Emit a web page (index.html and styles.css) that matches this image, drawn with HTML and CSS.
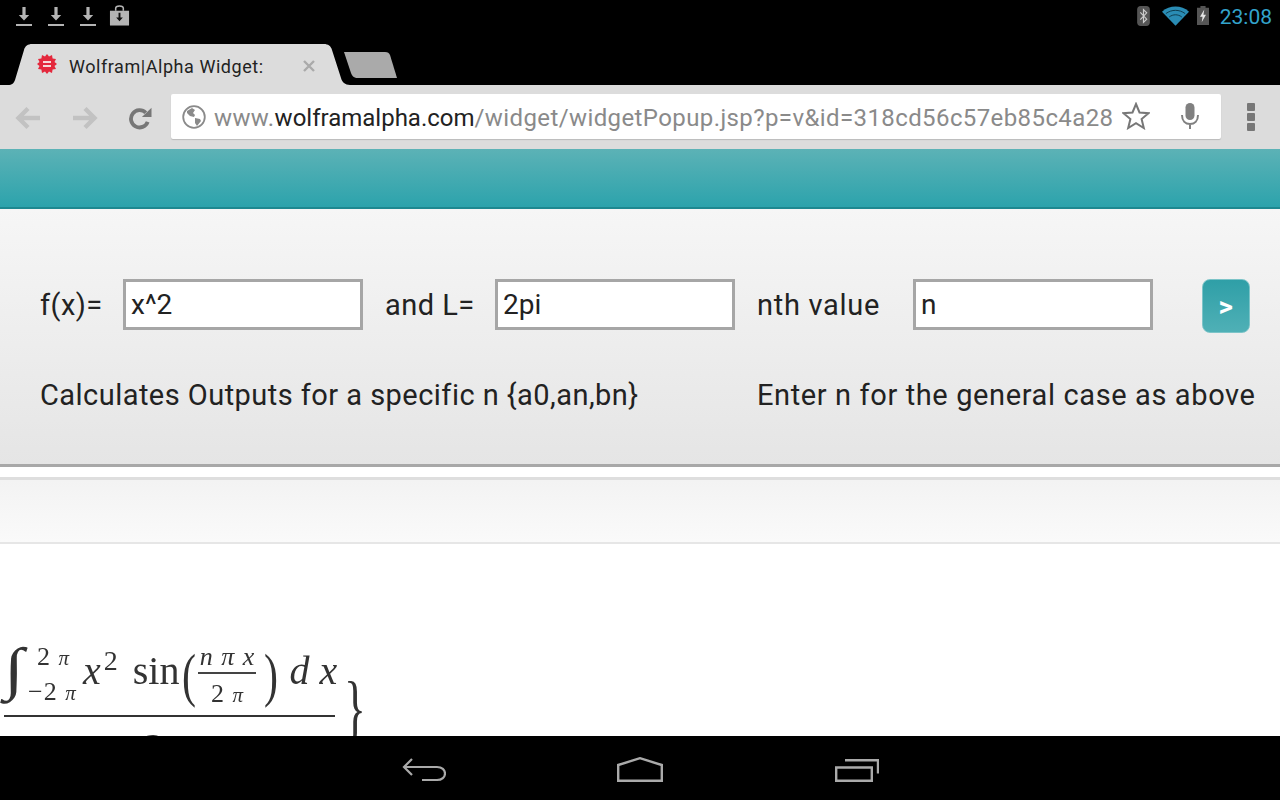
FILE: index.html
```html
<!DOCTYPE html>
<html lang="en">
<head>
    <meta charset="UTF-8">
    <title>Wolfram|Alpha Widget:</title>
    <link rel="stylesheet" href="styles.css">
</head>
<body>
    <div class="chrome-top">
        <div class="status-bar">
            <div class="status-left">
                <svg class="icon-dl" viewBox="0 0 16 20"><path d="M6.400 1h3.200v8h3.600L8 14.500 2.800 9h3.600z" fill="#b4b4b4"/><rect y="18" width="16" height="2" fill="#b4b4b4"/></svg>
                <svg class="icon-dl" viewBox="0 0 16 20"><path d="M6.400 1h3.200v8h3.600L8 14.500 2.800 9h3.600z" fill="#b4b4b4"/><rect y="18" width="16" height="2" fill="#b4b4b4"/></svg>
                <svg class="icon-dl" viewBox="0 0 16 20"><path d="M6.400 1h3.200v8h3.600L8 14.500 2.800 9h3.600z" fill="#b4b4b4"/><rect y="18" width="16" height="2" fill="#b4b4b4"/></svg>
                <svg class="icon-bag" viewBox="0 0 22 22"><path d="M1 6h20v15.500H1z" fill="#b4b4b4"/><path d="M7 6V3.500C7 2 8.500 1 11 1s4 1 4 2.500V6" fill="none" stroke="#b4b4b4" stroke-width="1.600"/><path d="M10 8h2v5h2.500L11 17l-3.500-4H10z" fill="#111"/></svg>
            </div>
            <div class="status-right">
                <svg class="icon-bt" viewBox="0 0 14 22"><rect width="14" height="22" rx="4" fill="#555"/><path d="M3.500 7l7 7.500L7 18V4l3.500 3.500L3.500 15" fill="none" stroke="#ccc" stroke-width="1.300"/></svg>
                <svg class="icon-wifi" viewBox="0 0 28 20"><path d="M0 5.500C8-1.500 20-1.500 28 5.500L14 20z" fill="#2a8cb4"/><path d="M4 7.500C10 3 18 3 24 7.500M7.500 11c4-3 9-3 13 0" fill="none" stroke="#0c3a4c" stroke-width="1"/></svg>
                <svg class="icon-batt" viewBox="0 0 14 22"><path d="M4 0h6v2h4v20H0V2h4z" fill="#555"/><path d="M8.500 4L3.500 12.500h3L5.500 19l5-9h-3z" fill="#e6e6e6"/></svg>
                <span class="clock">23:08</span>
            </div>
        </div>
        <div class="tab-strip">
            <div class="tab">
                <svg class="favicon" viewBox="0 0 20 20"><path d="M10 0l2 2.500L15 1l.6 3.400L19 5l-1.500 3L20 10l-2.500 2 1.500 3-3.400.6L15 19l-3-1.500L10 20l-2-2.500L5 19l-.6-3.400L1 15l1.500-3L0 10l2.500-2L1 5l3.400-.6L5 1l3 1.500z" fill="#e4283c"/><path d="M6 7h8v2H6zM6 11h8v2H6z" fill="#f6d8d8"/></svg>
                <span class="tab-title">Wolfram|Alpha Widget:</span>
                <svg class="tab-close" viewBox="0 0 12 12"><path d="M1 1l10 10M11 1L1 11" stroke="#aaa" stroke-width="2.400"/></svg>
            </div>
            <div class="new-tab"></div>
        </div>
    </div>

    <div class="toolbar">
        <svg class="nav-arrow" viewBox="0 0 26 24"><path d="M25 12H4M13 2.500L3.500 12l9.500 9.500" fill="none" stroke="#c2c2c2" stroke-width="4.400"/></svg>
        <svg class="nav-arrow nav-forward" viewBox="0 0 26 24"><path d="M1 12h21M13 2.500l9.500 9.500-9.500 9.500" fill="none" stroke="#c2c2c2" stroke-width="4.400"/></svg>
        <svg class="nav-reload" viewBox="0 0 24 24"><path d="M19.500 15.500A9 9 0 1 1 17.500 6" fill="none" stroke="#777" stroke-width="4"/><path d="M13.500 10.500H23.500V.8z" fill="#777"/></svg>
        <div class="omnibox">
            <svg class="globe" viewBox="0 0 24 24"><circle cx="12" cy="12" r="10.800" fill="#fff" stroke="#8a8a8a" stroke-width="1.800"/><path d="M5 6l5-3 3 2-2 3 2 2-1 2-4-1-3-3zM13 13l5 1 1 2-4 5-2-3z" fill="#8a8a8a"/></svg>
            <div class="url"><span class="url-dim">www.</span><span class="url-host">wolframalpha.com</span><span class="url-dim">/widget/widgetPopup.jsp?p=v&amp;id=318cd56c57eb85c4a28f</span></div>
            <svg class="star" viewBox="0 0 28 28"><path d="M14 2l3.500 8.500 9 .7-6.900 5.900 2.200 8.900L14 21.200 6.200 26l2.200-8.900-6.900-5.900 9-.7z" fill="none" stroke="#777" stroke-width="2"/></svg>
            <svg class="mic" viewBox="0 0 20 28"><rect x="5.500" y="1" width="9" height="17" rx="4.500" fill="#808080"/><path d="M2 13c0 6 3.500 9 8 9s8-3 8-9M10 22v5" fill="none" stroke="#808080" stroke-width="2"/></svg>
        </div>
        <div class="menu-dots"><i></i><i></i><i></i></div>
    </div>

    <div class="page">
        <div class="widget-head"></div>
        <div class="widget-form">
            <div class="form-row">
                <span class="lbl">f(x)=</span>
                <div class="field">x^2</div>
                <span class="lbl">and L=</span>
                <div class="field">2pi</div>
                <span class="lbl lbl-wide">nth value</span>
                <div class="field">n</div>
                <div class="go-btn">&gt;</div>
            </div>
            <div class="hint-row">
                <span class="hint-a">Calculates Outputs for a specific n {a0,an,bn}</span>
                <span class="hint-b">Enter n for the general case as above</span>
            </div>
        </div>
        <div class="pod-strip"></div>
        <div class="result">
            <div class="math">
                <div class="math-top">
                    <span class="integral">∫</span>
                    <span class="limits"><span class="lim-up">2 <i>π</i></span><span>−2 <i>π</i></span></span>
                    <span class="mvar">x<sup>2</sup></span>
                    <span class="fn">sin</span>
                    <span class="paren">(</span>
                    <span class="frac"><span class="frac-num">n π x</span><span>2 <i>π</i></span></span>
                    <span class="paren paren-r">)</span>
                    <span class="mvar dx">d x</span>
                </div>
                <div class="math-rule"></div>
                <div class="math-bottom">2 <i>π</i></div>
            </div>
            <span class="brace">}</span>
        </div>
    </div>

    <div class="nav-bar">
        <svg class="nav-back" viewBox="0 0 44 24"><path d="M10 1L2 9l8 8M2.500 9H35c5 0 8 3 8 6.500S40 22 35 22H20" fill="none" stroke="#aaa" stroke-width="2.200"/></svg>
        <svg class="nav-home" viewBox="0 0 46 25"><path d="M1.200 23.800V8L23 1.200 44.800 8v15.800z" fill="none" stroke="#aaa" stroke-width="2.400"/></svg>
        <svg class="nav-recent" viewBox="0 0 44 23"><path d="M1.200 8.500h35.600v13.300H1.200zM10 1.200h33v13.300" fill="none" stroke="#aaa" stroke-width="2.400"/></svg>
    </div>
</body>
</html>
```

FILE: styles.css
```css
* {
    box-sizing: border-box;
    margin: 0;
    padding: 0;
}

html,
body {
    height: 100%;
    overflow: hidden;
}

body {
    width: 1280px;
    height: 800px;
    display: flex;
    flex-direction: column;
    font-family: Roboto, "Liberation Sans", sans-serif;
    background: #000;
}

svg {
    display: block;
    flex: none;
}

/* status bar + tabs */
.chrome-top {
    height: 85px;
    background: #000;
}

.status-bar {
    height: 44px;
    display: flex;
    justify-content: space-between;
    align-items: flex-start;
    padding: 6px 8px 0 16px;
}

.status-left {
    display: flex;
    gap: 16px;
}

.icon-dl {
    width: 16px;
    height: 20px;
}

.icon-bag {
    width: 21px;
    height: 21px;
    margin: -1px 0 0 -3px;
}

.status-right {
    display: flex;
    align-items: flex-start;
    color: #33a4cc;
}

.icon-bt {
    width: 13px;
    height: 20px;
}

.icon-wifi {
    width: 27px;
    height: 20px;
    margin-left: 12px;
}

.icon-batt {
    width: 12px;
    height: 21px;
    margin: -1px 0 0 8px;
}

.clock {
    margin-left: 11px;
    font-size: 21px;
    line-height: 23px;
}

.tab-strip {
    height: 41px;
    display: flex;
    align-items: flex-end;
    padding-left: 8px;
}

.tab {
    width: 342px;
    height: 41px;
    display: flex;
    align-items: center;
    padding: 4px 0 0 29px;
    background: #dcdcdc;
    clip-path: path("M0 41 C4 41 6 39 7 36 L16 6 C17 2 20 0 24 0 L316 0 C320 0 323 2 324 6 L333 34 C334 38 337 41 342 41 Z");
}

.favicon {
    width: 20px;
    height: 20px;
    margin-top: -5px;
}

.tab-title {
    margin-left: 12px;
    font-size: 18px;
    letter-spacing: .55px;
    color: #222;
}

.tab-close {
    width: 12px;
    height: 12px;
    margin: -2px 0 0 39px;
}

.new-tab {
    width: 53px;
    height: 26px;
    margin: 0 0 7px -6px;
    background: #aaa;
    clip-path: path("M0 0 L41 0 C44 0 45 1 46 3 L53 26 L14 26 C10 26 8 24 7 21 Z");
}

/* toolbar */
.toolbar {
    height: 64px;
    display: flex;
    align-items: center;
    padding-left: 15px;
    background: #dcdcdc;
}

.nav-arrow {
    width: 26px;
    height: 24px;
    margin-top: 2px;
}

.nav-forward {
    margin-left: 31px;
}

.nav-reload {
    width: 23px;
    height: 23px;
    margin: 2px 0 0 31px;
}

.omnibox {
    width: 1050px;
    height: 45px;
    margin: -2px 0 0 19px;
    display: flex;
    align-items: center;
    padding-left: 11px;
    background: #fff;
    border-radius: 2px;
    box-shadow: 0 1px 1px #bbb;
}

.globe {
    width: 24px;
    height: 24px;
    margin-top: 1px;
}

.url {
    width: 899px;
    margin: 3px 0 0 8px;
    overflow: hidden;
    white-space: nowrap;
    font-size: 24px;
}

.url-dim {
    color: #8a8a8a;
    letter-spacing: .4px;
}

.url-host {
    color: #222;
}

.star {
    width: 28px;
    height: 28px;
    margin-left: 9px;
}

.mic {
    width: 20px;
    height: 28px;
    margin-left: 30px;
}

.menu-dots {
    margin-left: 26px;
    display: flex;
    flex-direction: column;
    gap: 2px;
}

.menu-dots i {
    display: block;
    width: 8px;
    height: 8px;
    border-radius: 1px;
    background: #777;
}

/* page */
.page {
    height: 587px;
    display: flex;
    flex-direction: column;
    background: #fff;
    overflow: hidden;
}

.widget-head {
    height: 60px;
    flex: none;
    background: linear-gradient(#5cb2b6, #2ca3ac);
    border-bottom: 2px solid #1e8890;
}

.widget-form {
    height: 258px;
    flex: none;
    padding: 70px 0 0 40px;
    background: linear-gradient(#f6f6f6, #e5e5e5);
    border-bottom: 3px solid #a8a8a8;
    color: #222;
    font-size: 29px;
    letter-spacing: .46px;
}

.form-row {
    display: grid;
    grid-template-columns: 83px 262px 110px 262px 156px 240px 1fr;
    grid-template-rows: 51px;
    align-items: center;
    height: 51px;
}

.lbl {
    margin-top: 1px;
}

.lbl-wide {
    letter-spacing: .7px;
}

.field {
    width: 240px;
    height: 51px;
    padding: 0 0 1px 5px;
    display: flex;
    align-items: center;
    background: #fff;
    border: 3px solid #a6a6a6;
    font-size: 28px;
    letter-spacing: 0;
}

.go-btn {
    width: 48px;
    height: 54px;
    margin-left: 49px;
    align-self: start;
    display: flex;
    align-items: center;
    justify-content: center;
    border-radius: 8px;
    border: 1px solid #7cc4c8;
    background: linear-gradient(#2f9fa7, #4fb0b6);
    color: #fff;
    font-size: 28px;
    font-weight: 700;
}

.hint-row {
    display: flex;
    margin-top: 48px;
}

.hint-a {
    width: 717px;
}

.hint-b {
    letter-spacing: .62px;
}

.pod-strip {
    height: 67px;
    flex: none;
    margin-top: 10px;
    background: linear-gradient(#f3f3f3, #fafafa);
    border-top: 3px solid #dedede;
    border-bottom: 2px solid #e6e6e6;
}

/* formula, scaled raster in the original so slightly soft */
.result {
    flex: 1;
    display: flex;
    align-items: flex-start;
    padding: 100px 0 0 4px;
    color: #333;
    font-family: "Liberation Serif", serif;
    font-size: 40px;
    filter: blur(.4px);
}

.math {
    width: 331px;
    flex: none;
}

.math-top {
    height: 71px;
    padding-bottom: 9px;
    display: flex;
    align-items: center;
    white-space: nowrap;
}

.math-top > * {
    flex: none;
}

.integral {
    width: 24px;
    margin-bottom: 12px;
    font-size: 58px;
    line-height: 60px;
    transform: scaleX(1.25);
    transform-origin: left center;
}

.limits {
    width: 55px;
    display: flex;
    flex-direction: column;
    font-size: 26px;
    line-height: 34px;
    letter-spacing: 1px;
}

.lim-up {
    padding-left: 9px;
}

.limits i,
.frac i {
    font-size: 21px;
}

.mvar,
.fn {
    margin-bottom: 9px;
}

.mvar {
    font-style: italic;
}

.mvar sup {
    margin-left: 3px;
    font-style: normal;
    font-size: 28px;
    line-height: 0;
}

.fn {
    margin-left: 15px;
}

.paren {
    width: 20px;
    font-size: 60px;
    font-weight: 400;
    line-height: 60px;
    transform: scaleX(.7);
}

.paren-r {
    margin-left: 5px;
}

.frac {
    width: 58px;
    margin: 8px 0 0 -1px;
    display: flex;
    flex-direction: column;
    align-items: center;
    font-size: 26px;
    line-height: 40px;
    letter-spacing: 1px;
}

.frac-num {
    width: 100%;
    padding-bottom: 2px;
    text-align: center;
    font-style: italic;
    border-bottom: 2px solid #444;
    line-height: 26px;
}

.dx {
    margin-left: 8px;
}

.math-rule {
    height: 2px;
    background: #333;
}

.math-bottom {
    padding-top: 9px;
    text-align: center;
    line-height: 44px;
}

.brace {
    margin: 24px 0 0 9px;
    font-size: 76px;
    font-weight: 400;
    line-height: 80px;
    transform: scaleX(.6);
    transform-origin: left top;
}

/* nav bar */
.nav-bar {
    height: 64px;
    display: flex;
    align-items: flex-start;
    padding: 20px 0 0 402px;
    background: #000;
}

.nav-back {
    width: 44px;
    height: 24px;
    margin-top: 2px;
}

.nav-home {
    width: 46px;
    height: 25px;
    margin: 1px 0 0 171px;
}

.nav-recent {
    width: 44px;
    height: 23px;
    margin: 3px 0 0 172px;
}
```
